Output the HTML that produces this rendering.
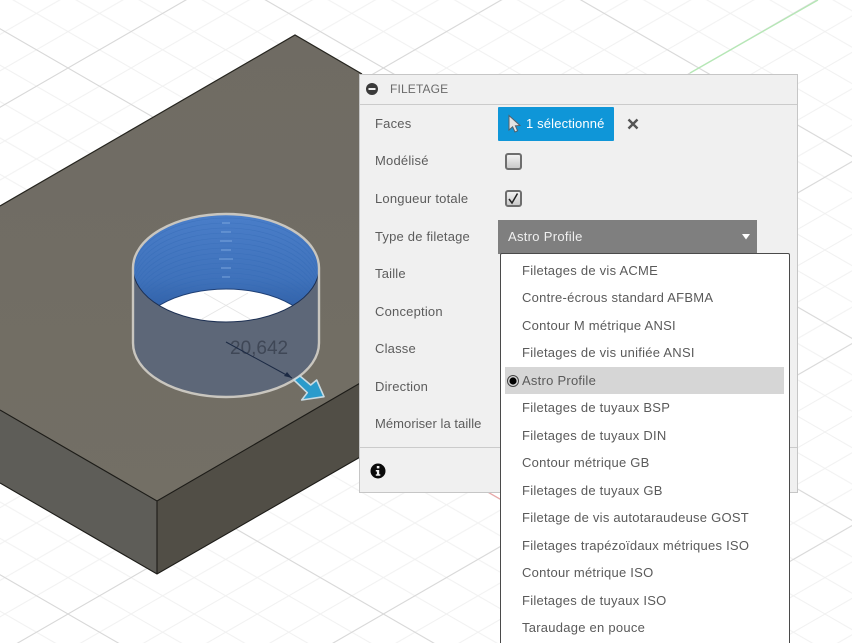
<!DOCTYPE html>
<html lang="fr">
<head>
<meta charset="utf-8">
<title>Filetage</title>
<style>
html,body{margin:0;padding:0;background:#fff}
#stage{position:relative;width:852px;height:643px;overflow:hidden;background:#fff;font-family:"Liberation Sans",sans-serif;font-size:13px;color:#5a5a5a;filter:blur(.35px)}
#stage svg.scene{position:absolute;left:0;top:0}
.panel{position:absolute;left:359px;top:74px;width:437px;height:417px;background:#f0f0f0;border:1px solid #c6c6c6}
.abs{position:absolute;white-space:nowrap}
.lab{position:absolute;left:375px;line-height:16px;white-space:nowrap;letter-spacing:.2px;color:#5c5c5c}
.line{position:absolute;height:1px;background:#cbcbcb}
.btn{position:absolute;left:498px;top:107px;width:116px;height:34px;background:#0f96d8;border-radius:1px;color:#fff}
.cb{position:absolute;left:505px;width:13px;height:13px;border:2px solid #6e6e6e;border-radius:3px;background:linear-gradient(#f2f2f2,#c9c9c9)}
.dd{position:absolute;left:498px;top:220px;width:259px;height:34px;background:#7f7f7f;color:#f0f0f0}
.list{position:absolute;left:500px;top:253px;width:288px;height:400px;background:#fff;border:1px solid #4a4a4a;border-radius:2px;box-sizing:content-box}
.hl{position:absolute;left:505px;top:367px;width:279px;height:27px;background:#d6d6d6}
.it{position:absolute;left:522px;line-height:16px;white-space:nowrap;letter-spacing:.25px;color:#5a5a5a}
</style>
</head>
<body>
<div id="stage">
<svg class="scene" width="852" height="643" viewBox="0 0 852 643" xmlns="http://www.w3.org/2000/svg">
  <defs>
    <pattern id="minor" patternUnits="userSpaceOnUse" x="68" y="68" width="63.08" height="36.4">
      <path d="M0,0L63.08,36.4M0,36.4L63.08,0" stroke="#f1f1f1" stroke-width="1" fill="none"/>
    </pattern>
    <pattern id="major" patternUnits="userSpaceOnUse" x="68" y="68" width="315.4" height="182">
      <path d="M0,0L315.4,182M0,182L315.4,0" stroke="#d8d8d8" stroke-width="1" fill="none"/>
    </pattern>
    <linearGradient id="top" x1="0" y1="0" x2="0" y2="1">
      <stop offset="0" stop-color="#6f6b63"/><stop offset="1" stop-color="#736f65"/>
    </linearGradient>
    <linearGradient id="blue" x1="0" y1="0" x2="0" y2="1">
      <stop offset="0" stop-color="#4a7ec9"/><stop offset=".6" stop-color="#3f72bb"/><stop offset="1" stop-color="#2c5a9f"/>
    </linearGradient>
    <clipPath id="topE"><ellipse cx="226" cy="268" rx="93" ry="54"/></clipPath>
  </defs>
  <rect width="852" height="643" fill="#fff"/>
  <rect width="852" height="643" fill="url(#minor)"/>
  <rect width="852" height="643" fill="url(#major)"/>
  <line x1="690" y1="73" x2="818" y2="0" stroke="#b5e8b5" stroke-width="1.3"/>
  <line x1="486" y1="491" x2="500" y2="499" stroke="#eba5a5" stroke-width="1.2"/>

  <polygon points="0,483 157,574 157,501 0,410" fill="#5e5d58"/>
  <polygon points="157,501 362,382 362,456 157,574" fill="#514e46"/>
  <polygon points="295,35 0,206 0,410 157,501 362,382 362,74" fill="url(#top)"/>
  <path d="M0,206L295,35L362,74" fill="none" stroke="#26251f" stroke-width="1.2"/>
  <path d="M0,410L157,501L362,382M157,501V574M0,483L157,574L362,456" fill="none" stroke="#1d1c18" stroke-width="1.1"/>

  <!-- cylinder hole -->
  <path d="M133,268V343A93,54 0 0 0 319,343V268Z" fill="#5d6778"/>
  <ellipse cx="226" cy="268" rx="93" ry="54" fill="url(#blue)"/>
  <g clip-path="url(#topE)" fill="none" stroke="#336ab5" stroke-width=".6" opacity=".5">
    <ellipse cx="226" cy="272" rx="93" ry="54"/><ellipse cx="226" cy="277" rx="93" ry="54"/>
    <ellipse cx="226" cy="282" rx="93" ry="54"/><ellipse cx="226" cy="287" rx="93" ry="54"/>
    <ellipse cx="226" cy="292" rx="93" ry="54"/><ellipse cx="226" cy="297" rx="93" ry="54"/>
    <ellipse cx="226" cy="302" rx="93" ry="54"/><ellipse cx="226" cy="307" rx="93" ry="54"/>
    <ellipse cx="226" cy="312" rx="93" ry="54"/><ellipse cx="226" cy="317" rx="93" ry="54"/>
    <ellipse cx="226" cy="322" rx="93" ry="54"/><ellipse cx="226" cy="327" rx="93" ry="54"/>
    <ellipse cx="226" cy="332" rx="93" ry="54"/><ellipse cx="226" cy="337" rx="93" ry="54"/>
  </g>
  <g stroke="#7aa5dd" stroke-width="1">
    <path d="M222,223h8M221,232h10M220,241h12M221,250h10M219,259h14M221,268h10M222,277h8"/>
  </g>
  <g clip-path="url(#topE)">
    <ellipse cx="226" cy="343" rx="93" ry="54" fill="#fff"/>
    <path d="M204,293L250,319M248,293L202,319" stroke="#e6e6e6" stroke-width="1"/>
    <ellipse cx="226" cy="343" rx="93" ry="54" fill="none" stroke="#1e3f75" stroke-width="1"/>
  </g>
  <path d="M133,268A93,54 0 0 0 319,268" fill="none" stroke="#1c2f52" stroke-width="1"/>
  <path d="M133,343V268A93,54 0 0 1 319,268V343A93,54 0 0 1 133,343Z" fill="none" stroke="#c9c6bf" stroke-width="2.4"/>

  <!-- dimension -->
  <text x="230" y="354" font-family="Liberation Sans, sans-serif" font-size="19" fill="#3f4756">20,642</text>
  <line x1="226" y1="342" x2="292" y2="378" stroke="#1c2a44" stroke-width="1"/>
  <polygon points="292,378 284,376 287,372" fill="#1c2a44"/>
  <polygon points="294,380 300,376 310.7,385 316.7,380 324,396.7 301.7,400 307.3,392.7" fill="#2a9bcb" stroke="#c9dbe2" stroke-width="1.6" stroke-linejoin="round"/>
</svg>

<div class="panel"></div>
<div class="line" style="left:360px;top:104px;width:437px"></div>
<div class="line" style="left:360px;top:447px;width:437px"></div>

<svg class="abs" style="left:365px;top:82px" width="14" height="14" viewBox="0 0 14 14"><circle cx="7" cy="7" r="6" fill="#3a3a3a"/><rect x="3.5" y="6" width="7" height="2" fill="#f0f0f0"/></svg>
<div class="abs" style="left:390px;top:81px;line-height:16px;color:#6a6a6a;font-size:12px;letter-spacing:.15px">FILETAGE</div>

<div class="lab" style="top:116px">Faces</div>
<div class="lab" style="top:153px">Modélisé</div>
<div class="lab" style="top:191px">Longueur totale</div>
<div class="lab" style="top:229px">Type de filetage</div>
<div class="lab" style="top:266px">Taille</div>
<div class="lab" style="top:304px">Conception</div>
<div class="lab" style="top:341px">Classe</div>
<div class="lab" style="top:379px">Direction</div>
<div class="lab" style="top:416px;letter-spacing:.05px">Mémoriser la taille</div>

<div class="btn">
  <svg class="abs" style="left:9px;top:7px" width="16" height="20" viewBox="0 0 16 20"><path d="M2,1.5V16L5.6,12.8L8,18L10.6,16.8L8.4,11.8L13,11.5Z" fill="#e4e4e4" stroke="#55606a" stroke-width="1"/></svg>
  <div class="abs" style="left:28px;top:9px;line-height:16px;letter-spacing:.15px">1 sélectionné</div>
</div>
<svg class="abs" style="left:627px;top:118px" width="12" height="12" viewBox="0 0 12 12"><path d="M1.5,1.5L10.5,10.5M10.5,1.5L1.5,10.5" stroke="#555" stroke-width="2.4"/></svg>

<div class="cb" style="top:153px"></div>
<div class="cb" style="top:190px"></div>
<svg class="abs" style="left:505px;top:190px" width="17" height="17" viewBox="0 0 17 17"><path d="M4,9L7,13L12.5,3.5" fill="none" stroke="#222" stroke-width="1.5"/></svg>

<div class="dd">
  <div class="abs" style="left:10px;top:9px;line-height:16px;letter-spacing:.3px">Astro Profile</div>
  <svg class="abs" style="left:244px;top:14px" width="8" height="6" viewBox="0 0 8 6"><path d="M0,0H8L4,5.5Z" fill="#fff"/></svg>
</div>

<div class="list"></div>
<div class="hl"></div>
<svg class="abs" style="left:506px;top:374px" width="14" height="14" viewBox="0 0 14 14"><circle cx="7" cy="7" r="5.5" fill="none" stroke="#444" stroke-width="1"/><circle cx="7" cy="7" r="3.6" fill="#000"/></svg>

<div class="it" style="top:263px">Filetages de vis ACME</div>
<div class="it" style="top:290px">Contre-écrous standard AFBMA</div>
<div class="it" style="top:318px">Contour M métrique ANSI</div>
<div class="it" style="top:345px">Filetages de vis unifiée ANSI</div>
<div class="it" style="top:373px">Astro Profile</div>
<div class="it" style="top:400px">Filetages de tuyaux BSP</div>
<div class="it" style="top:428px">Filetages de tuyaux DIN</div>
<div class="it" style="top:455px">Contour métrique GB</div>
<div class="it" style="top:483px">Filetages de tuyaux GB</div>
<div class="it" style="top:510px">Filetage de vis autotaraudeuse GOST</div>
<div class="it" style="top:538px">Filetages trapézoïdaux métriques ISO</div>
<div class="it" style="top:565px">Contour métrique ISO</div>
<div class="it" style="top:593px">Filetages de tuyaux ISO</div>
<div class="it" style="top:620px">Taraudage en pouce</div>

<svg class="abs" style="left:370px;top:463px" width="16" height="16" viewBox="0 0 16 16"><circle cx="8" cy="8" r="7.5" fill="#0a0a0a"/><rect x="6.8" y="3" width="2.6" height="2.4" fill="#f0f0f0"/><path d="M5.8,7H9.2V11.2H10.3V12.8H5.8V11.2H6.9V8.5H5.8Z" fill="#f0f0f0"/></svg>
</div>
</body>
</html>
